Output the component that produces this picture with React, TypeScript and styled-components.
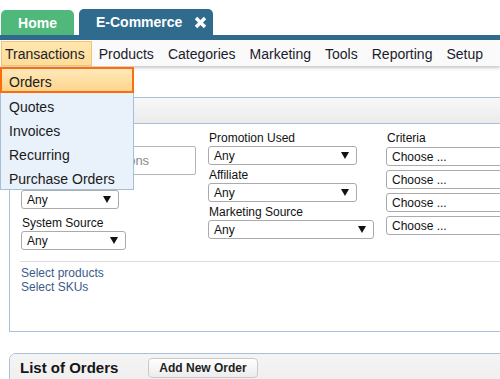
import React from 'react';
import styled, { createGlobalStyle } from 'styled-components';

const GlobalStyle = createGlobalStyle`
  html, body {
    margin: 0;
    padding: 0;
    background: #ffffff;
    overflow: hidden;
  }
  body {
    font-family: 'Liberation Sans', Arial, sans-serif;
    color: #111;
  }
`;

const Page = styled.div`
  width: 500px;
  height: 379px;
  overflow: hidden;
`;

const TabBar = styled.div`
  display: flex;
  align-items: flex-end;
  gap: 5px;
  height: 40px;
  box-sizing: border-box;
  padding-left: 1px;
  border-bottom: 5px solid #2f6b8d;
`;

const Tab = styled.div<{ $active?: boolean }>`
  display: flex;
  align-items: center;
  justify-content: ${(p) => (p.$active ? 'space-between' : 'center')};
  box-sizing: border-box;
  width: ${(p) => (p.$active ? '134px' : '73px')};
  height: ${(p) => (p.$active ? '26px' : '25px')};
  padding: ${(p) => (p.$active ? '0 6px 0 17px' : '0')};
  border-radius: 5px 5px 0 0;
  background: ${(p) => (p.$active ? '#2f6b8d' : '#50b87a')};
  color: #ffffff;
  font-size: 14px;
  font-weight: bold;
`;

const MenuBar = styled.div`
  position: relative;
  z-index: 2;
  display: flex;
  gap: 3px;
  height: 26px;
  padding-left: 1px;
  background: #fafafa;
  box-shadow: 0 2px 3px rgba(0, 0, 0, 0.22);
`;

const MenuItem = styled.div<{ $open?: boolean }>`
  box-sizing: border-box;
  height: 25px;
  margin-top: 1px;
  padding: 0 6px 0 3px;
  display: flex;
  align-items: center;
  font-size: 14px;
  color: #1c1c2c;
  border: 1px solid ${(p) => (p.$open ? '#f0c27a' : 'transparent')};
  background: ${(p) => (p.$open ? 'linear-gradient(#ffe6ae, #fddc98)' : 'transparent')};
`;

const Dropdown = styled.div`
  position: absolute;
  top: 27px;
  left: 0;
  width: 134px;
  box-sizing: border-box;
  background: #e9f1fb;
  border: 1px solid #a6bed6;
  border-top: none;
`;

const DropItem = styled.div<{ $hot?: boolean }>`
  box-sizing: border-box;
  height: ${(p) => (p.$hot ? '26px' : '24px')};
  margin: ${(p) => (p.$hot ? '0 -1px' : '0')};
  padding: 3px 0 0 ${(p) => (p.$hot ? '7px' : '8px')};
  display: flex;
  align-items: center;
  font-size: 14px;
  color: #1a1a1a;
  border: ${(p) => (p.$hot ? '2px solid #ff6c0a' : 'none')};
  background: ${(p) => (p.$hot ? 'linear-gradient(#ffe9bb, #fdd58c)' : 'transparent')};
`;

const Content = styled.div`
  padding-left: 9px;
`;

const Panel = styled.div<{ $round?: boolean }>`
  width: 560px;
  box-sizing: border-box;
  border: 1px solid #a8c0d8;
  border-radius: ${(p) => (p.$round ? '7px 0 0 0' : '0')};
  margin-top: ${(p) => (p.$round ? '21px' : '31px')};
  overflow: hidden;
`;

const PanelHeader = styled.div`
  height: 25px;
  background: linear-gradient(#f8f8f8, #ebebeb);
  border-bottom: 1px solid #a8c0d8;
`;

const PanelBody = styled.div`
  padding: 7px 0 37px 10px;
`;

const Fields = styled.div`
  display: grid;
  grid-template-columns: 187px 178px 1fr;
  align-items: start;
`;

const Column = styled.div`
  display: flex;
  flex-direction: column;
  align-items: flex-start;
  padding-left: 1px;
`;

const Label = styled.div<{ $space?: number }>`
  font-size: 12px;
  line-height: 15px;
  color: #111;
  margin-top: ${(p) => p.$space ?? 0}px;
  padding-left: 1px;
`;

const SearchBox = styled.div`
  width: 175px;
  height: 29px;
  box-sizing: border-box;
  border: 1px solid #b4b4b4;
  border-radius: 2px;
  padding-left: 5px;
  display: flex;
  align-items: center;
  font-size: 13px;
  color: #8a8a8a;
`;

const Select = styled.div<{ $w: number; $space?: number }>`
  width: ${(p) => p.$w}px;
  height: 19px;
  margin-top: ${(p) => p.$space ?? 0}px;
  box-sizing: border-box;
  border: 1px solid #ababab;
  border-radius: 3px;
  background: #ffffff;
  display: flex;
  align-items: center;
  justify-content: space-between;
  padding: 0 7px 0 5px;
  font-size: 12px;
  color: #111;
`;

const Divider = styled.div`
  margin-top: 11px;
  border-top: 1px solid #dcdcdc;
`;

const Links = styled.div`
  margin-top: 4px;
  display: flex;
  flex-direction: column;
  padding-left: 1px;
`;

const Link = styled.a`
  font-size: 12px;
  line-height: 14px;
  color: #3a5b8c;
  text-decoration: none;
`;

const ListHeader = styled.div`
  display: flex;
  align-items: center;
  height: 27px;
  padding-left: 10px;
  background: linear-gradient(#f4f4f4, #efefef);
`;

const Title = styled.h2`
  margin: 0;
  font-size: 15px;
  font-weight: bold;
  color: #151515;
`;

const Button = styled.button`
  margin-left: 30px;
  height: 20px;
  padding: 0 10px;
  border: 1px solid #c9c9c9;
  border-radius: 4px;
  background: linear-gradient(#ffffff, #ececec);
  font-family: 'Liberation Sans', Arial, sans-serif;
  font-size: 12px;
  font-weight: bold;
  color: #222;
`;

const Arrow = () => (
  <svg width="8" height="7" viewBox="0 0 8 7">
    <path d="M0 0 H8 L4 7 Z" fill="#111" />
  </svg>
);

const CloseIcon = () => (
  <svg width="13" height="13" viewBox="0 0 13 13">
    <path d="M2 2 L11 11 M11 2 L2 11" stroke="#ffffff" strokeWidth="3.4" />
  </svg>
);

const menu = ['Transactions', 'Products', 'Categories', 'Marketing', 'Tools', 'Reporting', 'Setup'];
const subMenu = ['Orders', 'Quotes', 'Invoices', 'Recurring', 'Purchase Orders'];

const App: React.FC = () => {
  return (
    <Page>
      <GlobalStyle />
      <TabBar>
        <Tab>Home</Tab>
        <Tab $active>
          <span>E-Commerce</span>
          <CloseIcon />
        </Tab>
      </TabBar>
      <MenuBar>
        {menu.map((m, i) => (
          <MenuItem key={m} $open={i === 0}>
            {m}
          </MenuItem>
        ))}
        <Dropdown>
          {subMenu.map((s, i) => (
            <DropItem key={s} $hot={i === 0}>
              {s}
            </DropItem>
          ))}
        </Dropdown>
      </MenuBar>
      <Content>
        <Panel>
          <PanelHeader />
          <PanelBody>
            <Fields>
              <Column>
                <Label>Promotion Code</Label>
                <SearchBox>Codes or Promotions</SearchBox>
                <Label>Order Status</Label>
                <Select $w={98}>
                  <span>Any</span>
                  <Arrow />
                </Select>
                <Label $space={7}>System Source</Label>
                <Select $w={105}>
                  <span>Any</span>
                  <Arrow />
                </Select>
              </Column>
              <Column>
                <Label>Promotion Used</Label>
                <Select $w={149}>
                  <span>Any</span>
                  <Arrow />
                </Select>
                <Label $space={3}>Affiliate</Label>
                <Select $w={149}>
                  <span>Any</span>
                  <Arrow />
                </Select>
                <Label $space={3}>Marketing Source</Label>
                <Select $w={166}>
                  <span>Any</span>
                  <Arrow />
                </Select>
              </Column>
              <Column>
                <Label>Criteria</Label>
                {[0, 1, 2, 3].map((n) => (
                  <Select key={n} $w={160} $space={n === 0 ? 1 : 4}>
                    <span>Choose ...</span>
                  </Select>
                ))}
              </Column>
            </Fields>
            <Divider />
            <Links>
              <Link href="#">Select products</Link>
              <Link href="#">Select SKUs</Link>
            </Links>
          </PanelBody>
        </Panel>
        <Panel $round>
          <ListHeader>
            <Title>List of Orders</Title>
            <Button>Add New Order</Button>
          </ListHeader>
        </Panel>
      </Content>
    </Page>
  );
};

export default App;
